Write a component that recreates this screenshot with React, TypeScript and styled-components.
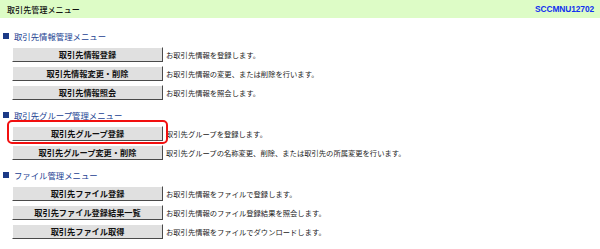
import React from 'react';
import styled, { createGlobalStyle } from 'styled-components';

const GlobalStyle = createGlobalStyle`
  html, body {
    margin: 0;
    padding: 0;
    background: #ffffff;
  }
  body {
    font-family: "Noto Sans CJK JP", "Noto Sans", sans-serif;
    color: #111;
  }
`;

const Page = styled.div`
  width: 600px;
  height: 249px;
  overflow: hidden;
  background: #fff;
`;

const TitleBar = styled.div`
  height: 18px;
  background: #ddfcc6;
  display: flex;
  align-items: center;
  justify-content: space-between;
  padding: 0 6px 0 7px;
`;

const TitleText = styled.div`
  font-size: 8px;
  font-weight: 500;
  color: #111;
  letter-spacing: 0.1px;
`;

const ScreenId = styled.div`
  font-family: "Liberation Sans", Arial, sans-serif;
  font-size: 8.4px;
  font-weight: bold;
  color: #1030f0;
  letter-spacing: -0.1px;
`;

const Content = styled.div`
  padding: 12px 0 0 3px;
  display: flex;
  flex-direction: column;
`;

const Section = styled.section`
  display: flex;
  flex-direction: column;
  & + & {
    margin-top: 9px;
  }
`;

const SectionTitle = styled.div`
  height: 12px;
  display: flex;
  align-items: center;
  font-size: 8.4px;
  color: #1b3f92;
  margin-bottom: 5px;
`;

const Square = styled.span`
  width: 6px;
  height: 6px;
  background: #1c3a86;
  margin-right: 5px;
  flex: none;
`;

const RowList = styled.div`
  display: flex;
  flex-direction: column;
  gap: 4px;
  padding-left: 9px;
`;

const Row = styled.div`
  display: flex;
  align-items: center;
  height: 15px;
`;

const ButtonWrap = styled.div`
  position: relative;
  flex: none;
`;

const MenuButton = styled.button`
  box-sizing: border-box;
  width: 151px;
  height: 15px;
  padding: 0;
  margin: 0;
  background: #e0e0e0;
  border-top: 1px solid #ffffff;
  border-left: 1px solid #ffffff;
  border-right: 1px solid #4a4a4a;
  border-bottom: 1px solid #4a4a4a;
  font-family: "Noto Sans CJK JP", sans-serif;
  font-size: 8.2px;
  font-weight: bold;
  color: #111;
  line-height: 13px;
  display: flex;
  align-items: center;
  justify-content: center;
`;

const Highlight = styled.div`
  position: absolute;
  left: -5px;
  right: -5px;
  top: -6px;
  bottom: -3px;
  border: 2.5px solid #f21010;
  border-radius: 5px;
  pointer-events: none;
`;

const Description = styled.div`
  margin-left: 3px;
  font-size: 7.3px;
  color: #222;
  white-space: nowrap;
`;

interface MenuItem {
  label: string;
  text: string;
  marked?: boolean;
}

interface MenuGroup {
  title: string;
  items: MenuItem[];
}

const groups: MenuGroup[] = [
  {
    title: '取引先情報管理メニュー',
    items: [
      { label: '取引先情報登録', text: 'お取引先情報を登録します。' },
      { label: '取引先情報変更・削除', text: 'お取引先情報の変更、または削除を行います。' },
      { label: '取引先情報照会', text: 'お取引先情報を照会します。' },
    ],
  },
  {
    title: '取引先グループ管理メニュー',
    items: [
      { label: '取引先グループ登録', text: '取引先グループを登録します。', marked: true },
      {
        label: '取引先グループ変更・削除',
        text: '取引先グループの名称変更、削除、または取引先の所属変更を行います。',
      },
    ],
  },
  {
    title: 'ファイル管理メニュー',
    items: [
      { label: '取引先ファイル登録', text: 'お取引先情報をファイルで登録します。' },
      { label: '取引先ファイル登録結果一覧', text: 'お取引先情報のファイル登録結果を照会します。' },
      { label: '取引先ファイル取得', text: 'お取引先情報をファイルでダウンロードします。' },
    ],
  },
];

const App: React.FC = () => {
  return (
    <Page>
      <GlobalStyle />
      <TitleBar>
        <TitleText>取引先管理メニュー</TitleText>
        <ScreenId>SCCMNU12702</ScreenId>
      </TitleBar>
      <Content>
        {groups.map((g) => (
          <Section key={g.title}>
            <SectionTitle>
              <Square />
              {g.title}
            </SectionTitle>
            <RowList>
              {g.items.map((item) => (
                <Row key={item.label}>
                  <ButtonWrap>
                    <MenuButton>{item.label}</MenuButton>
                    {item.marked ? <Highlight /> : <></>}
                  </ButtonWrap>
                  <Description>{item.text}</Description>
                </Row>
              ))}
            </RowList>
          </Section>
        ))}
      </Content>
    </Page>
  );
};

export default App;
